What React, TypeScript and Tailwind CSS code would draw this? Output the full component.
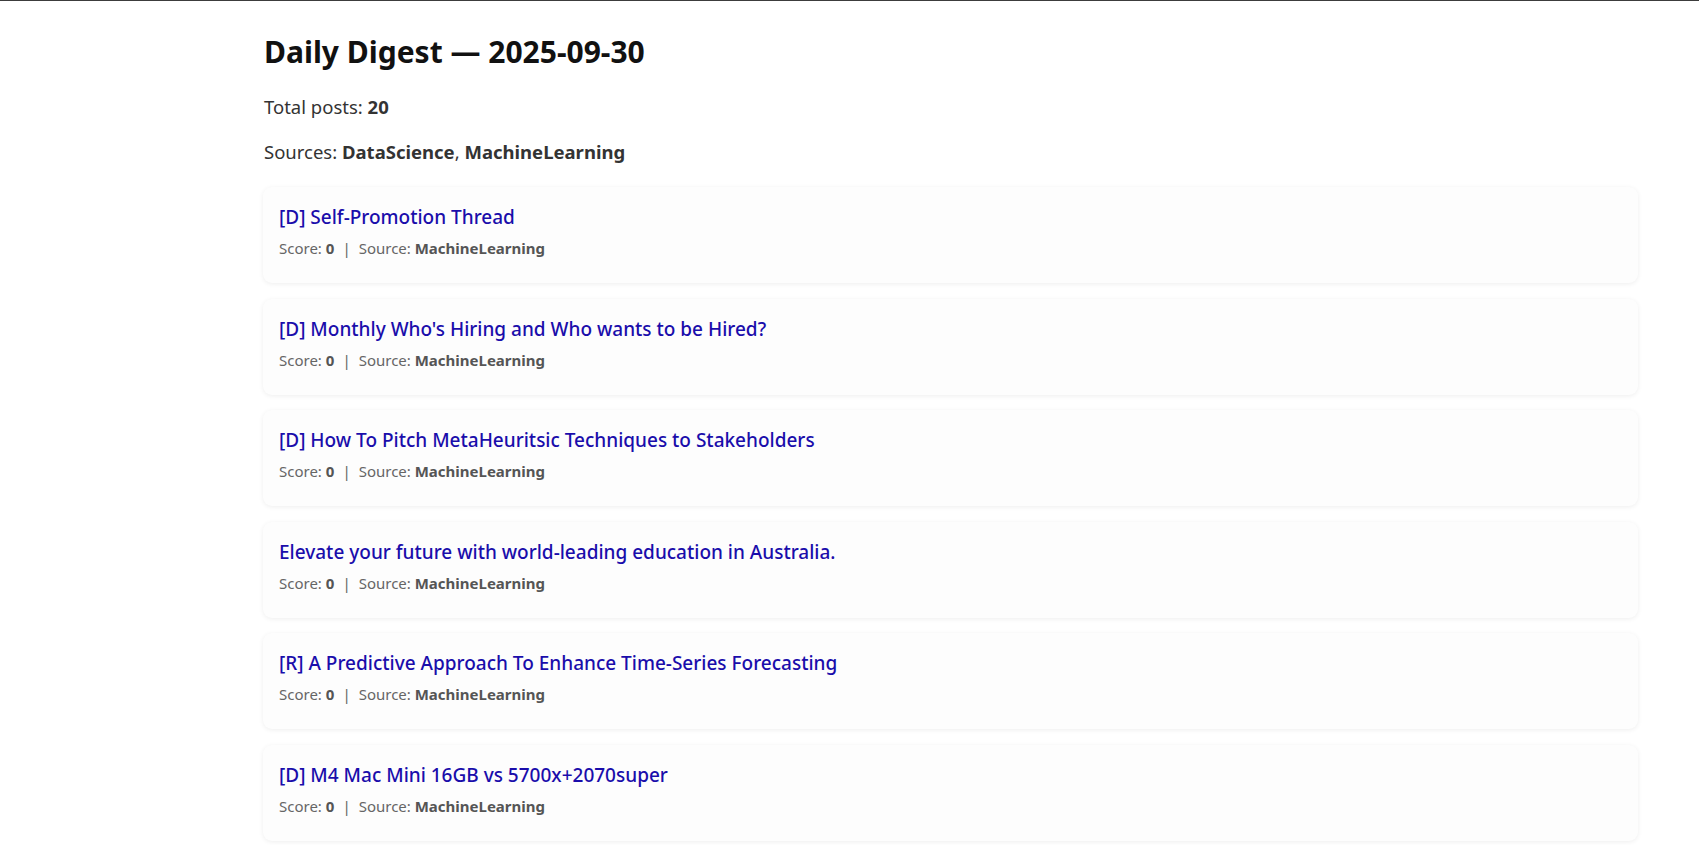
import React from "react";

interface Post {
  title: string;
  score: number;
  source: string;
}

const posts: Post[] = [
  { title: "[D] Self-Promotion Thread", score: 0, source: "MachineLearning" },
  { title: "[D] Monthly Who's Hiring and Who wants to be Hired?", score: 0, source: "MachineLearning" },
  { title: "[D] How To Pitch MetaHeuritsic Techniques to Stakeholders", score: 0, source: "MachineLearning" },
  { title: "Elevate your future with world-leading education in Australia.", score: 0, source: "MachineLearning" },
  { title: "[R] A Predictive Approach To Enhance Time-Series Forecasting", score: 0, source: "MachineLearning" },
  { title: "[D] M4 Mac Mini 16GB vs 5700x+2070super", score: 0, source: "MachineLearning" },
];

const PostCard = ({ post }: { post: Post }) => (
  <div className="h-[96px] rounded-[9px] bg-[#fdfdfd] px-4 pt-4 shadow-[0_1px_5px_rgba(0,0,0,0.07)]">
    <a href="#" className="block text-[19px] leading-[28px] font-medium text-[#1a0dab]">
      {post.title}
    </a>
    <div className="mt-[6px] text-[15px] leading-[22px] text-[#666]">
      Score: <b className="text-[#555]">{post.score}</b>
      <span className="mx-[8px]">|</span>
      Source: <b className="text-[#555]">{post.source}</b>
    </div>
  </div>
);

export default function App() {
  return (
    <div
      className="min-h-screen border-t border-[#3c3c3c] bg-white text-[#333]"
      style={{ fontFamily: '"Noto Sans", "Open Sans", sans-serif' }}
    >
      <div className="ml-[263px] mr-[61px] pt-[33px] pb-10">
        <h1 className="pl-px text-[30px] leading-[36px] font-bold text-[#111]">
          Daily Digest — 2025-09-30
        </h1>
        <p className="mt-[23px] pl-px text-[18.5px] leading-[27px]">
          Total posts: <b>20</b>
        </p>
        <p className="mt-[18px] pl-px text-[18.5px] leading-[27px]">
          Sources: <b>DataScience</b>, <b>MachineLearning</b>
        </p>
        <div className="mt-[22px] flex flex-col gap-[15.5px]">
          {posts.map((p, i) => (
            <PostCard key={i} post={p} />
          ))}
        </div>
      </div>
    </div>
  );
}
